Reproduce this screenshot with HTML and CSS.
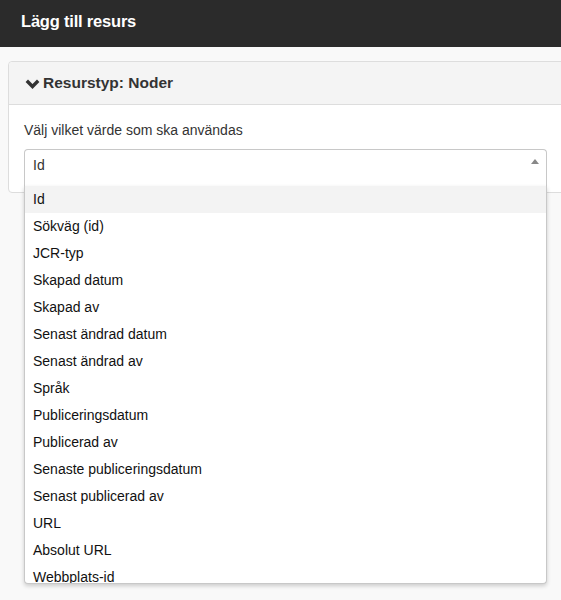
FILE: index.html
```
<!DOCTYPE html>
<html lang="sv">
<head>
<meta charset="utf-8">
<title>Lägg till resurs</title>
<link rel="stylesheet" href="styles.css">
</head>
<body>
<header class="topbar">
  <h1 class="title">Lägg till resurs</h1>
</header>
<main class="content">
  <section class="panel">
    <div class="panel-heading">
      <svg class="chevron" width="15" height="10" viewBox="0 0 15 10"><polyline points="1.8,1.8 7.5,7.5 13.2,1.8" fill="none" stroke="#333" stroke-width="3.4" stroke-linecap="butt"/></svg>
      <h2 class="panel-title">Resurstyp: Noder</h2>
    </div>
    <div class="panel-body">
      <label class="field-label">Välj vilket värde som ska användas</label>
      <div class="select-wrap">
        <div class="select-box">
          <span class="select-value">Id</span>
          <span class="select-arrow"></span>
        </div>
        <ul class="dropdown">
          <li class="option active">Id</li>
          <li class="option">Sökväg (id)</li>
          <li class="option">JCR-typ</li>
          <li class="option">Skapad datum</li>
          <li class="option">Skapad av</li>
          <li class="option">Senast ändrad datum</li>
          <li class="option">Senast ändrad av</li>
          <li class="option">Språk</li>
          <li class="option">Publiceringsdatum</li>
          <li class="option">Publicerad av</li>
          <li class="option">Senaste publiceringsdatum</li>
          <li class="option">Senast publicerad av</li>
          <li class="option">URL</li>
          <li class="option">Absolut URL</li>
          <li class="option">Webbplats-id</li>
        </ul>
      </div>
    </div>
  </section>
</main>
</body>
</html>
```
FILE: styles.css
```
* { box-sizing: border-box; }
html, body { margin: 0; padding: 0; }
body {
  background: #f9f9f9;
  font-family: "Liberation Sans", Arial, Helvetica, sans-serif;
  color: #333;
  overflow: hidden;
  height: 600px;
}
.topbar {
  height: 47px;
  background: #2b2b2b;
  display: flex;
  align-items: center;
  padding: 0 0 4px 21px;
}
.title {
  margin: 0;
  font-size: 16.5px;
  font-weight: bold;
  color: #fff;
  letter-spacing: -0.2px;
}
.content {
  padding: 14px 0 0 8px;
}
.panel {
  margin-right: -20px;
  border: 1px solid #dddddd;
  border-radius: 4px;
  background: #fff;
}
.panel-heading {
  height: 43px;
  background: #f4f4f4;
  border-bottom: 1px solid #dddddd;
  border-radius: 4px 4px 0 0;
  display: flex;
  align-items: center;
  padding: 0 0 0 16px;
  gap: 3px;
}
.chevron { display: block; margin-top: 1px; }
.panel-title {
  margin: 0;
  font-size: 15.5px;
  font-weight: bold;
  color: #333;
}
.panel-body {
  padding: 15px 15px 6px 15px;
}
.field-label {
  display: block;
  font-size: 14px;
  line-height: 20px;
  color: #333;
  margin-bottom: 9px;
}
.select-wrap {
  position: relative;
  width: 523px;
  height: 37px;
}
.select-box {
  height: 37px;
  background: #fff;
  border: 1px solid #c8c8c8;
  border-bottom: none;
  border-radius: 4px 4px 0 0;
  display: flex;
  justify-content: space-between;
  align-items: flex-start;
  padding: 5px 7px 0 8px;
}
.select-value {
  font-size: 14px;
  line-height: 20px;
  color: #333;
}
.select-arrow {
  width: 0;
  height: 0;
  margin-top: 4px;
  border-left: 4px solid transparent;
  border-right: 4px solid transparent;
  border-bottom: 5px solid #888;
}
.dropdown {
  position: absolute;
  top: 37px;
  left: 0;
  right: 0;
  height: 398px;
  margin: 0;
  padding: 0;
  list-style: none;
  overflow: hidden;
  background: #fff;
  border: 1px solid #c8c8c8;
  border-top: none;
  border-radius: 0 0 4px 4px;
  box-shadow: 0 2px 4px rgba(0,0,0,0.18);
  z-index: 10;
}
.option {
  height: 27px;
  padding: 3px 8px 4px 8px;
  font-size: 14px;
  line-height: 20px;
  color: #111;
}
.option.active {
  background: #f3f3f3;
}
```
